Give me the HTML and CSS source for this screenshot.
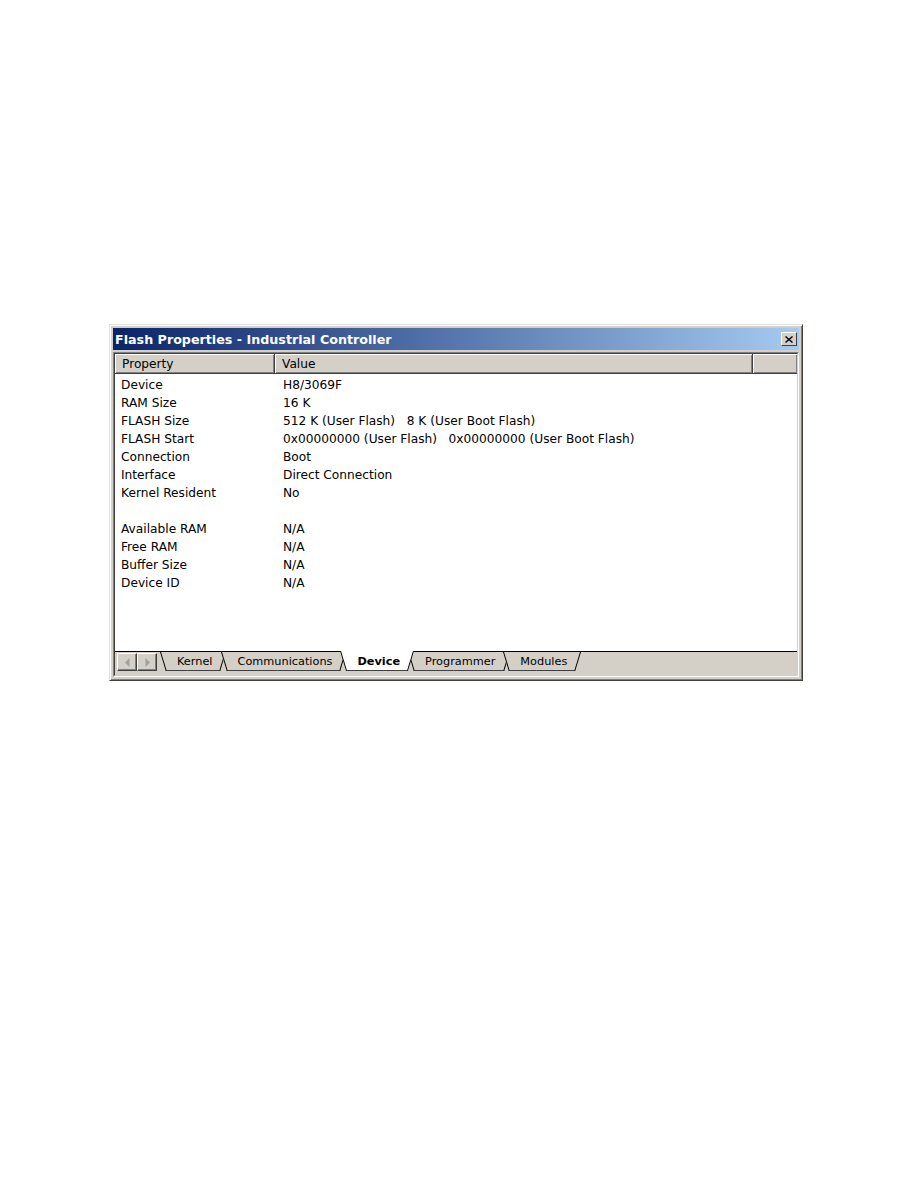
FILE: index.html
```
<!DOCTYPE html>
<html lang="en">
<head>
    <meta charset="UTF-8">
    <title>Flash Properties - Industrial Controller</title>
    <link rel="stylesheet" href="styles.css">
</head>
<body>
    <div class="page">
        <!-- Ventana de propiedades -->
        <div class="window">
            <div class="titlebar">
                <span>Flash Properties - Industrial Controller</span>
                <span class="close-btn">
                    <svg width="8" height="7" viewBox="0 0 8 7"><path d="M0.5 0.5 L7.5 6.5 M7.5 0.5 L0.5 6.5" stroke="#000" stroke-width="1.4"/></svg>
                </span>
            </div>

            <div class="list">
                <div class="list-inner">
                    <div class="header">
                        <div class="hcell prop">Property</div>
                        <div class="hcell val">Value</div>
                        <div class="hcell rest"></div>
                    </div>

                    <div class="rows">
                        <div class="row"><span class="k">Device</span><span class="v">H8/3069F</span></div>
                        <div class="row"><span class="k">RAM Size</span><span class="v">16 K</span></div>
                        <div class="row"><span class="k">FLASH Size</span><span class="v">512 K (User Flash)   8 K (User Boot Flash)</span></div>
                        <div class="row"><span class="k">FLASH Start</span><span class="v">0x00000000 (User Flash)   0x00000000 (User Boot Flash)</span></div>
                        <div class="row"><span class="k">Connection</span><span class="v">Boot</span></div>
                        <div class="row"><span class="k">Interface</span><span class="v">Direct Connection</span></div>
                        <div class="row"><span class="k">Kernel Resident</span><span class="v">No</span></div>
                        <div class="row"></div>
                        <div class="row"><span class="k">Available RAM</span><span class="v">N/A</span></div>
                        <div class="row"><span class="k">Free RAM</span><span class="v">N/A</span></div>
                        <div class="row"><span class="k">Buffer Size</span><span class="v">N/A</span></div>
                        <div class="row"><span class="k">Device ID</span><span class="v">N/A</span></div>
                    </div>

                    <!-- Pestañas -->
                    <div class="tabs">
                        <div class="scroll">
                            <span class="sbtn"><svg width="5" height="9" viewBox="0 0 5 9"><path d="M4.5 0 L0 4.5 L4.5 9 Z" fill="#a0a0a0"/></svg></span>
                            <span class="sbtn"><svg width="5" height="9" viewBox="0 0 5 9"><path d="M0.5 0 L5 4.5 L0.5 9 Z" fill="#a0a0a0"/></svg></span>
                        </div>
                        <div class="tab">Kernel</div>
                        <div class="tab">Communications</div>
                        <div class="tab active">Device</div>
                        <div class="tab">Programmer</div>
                        <div class="tab">Modules</div>
                    </div>
                </div>
            </div>
        </div>
    </div>
</body>
</html>
```

FILE: styles.css
```
/* Estilo general */
body { margin: 0; background-color: #fff; color: #000; font-family: "DejaVu Sans", Tahoma, sans-serif; font-size: 12.2px; }
.page { padding: 324px 0 0 109px; }

/* Ventana */
.window {
    width: 694px;
    height: 357px;
    box-sizing: border-box;
    background-color: #d4d0c8;
    border: 1px solid;
    border-color: #e4e2dc #404040 #404040 #e4e2dc;
    box-shadow: inset 1px 1px #fff, inset -1px -1px #808080;
    padding: 3px;
    display: flex;
    flex-direction: column;
}
.titlebar {
    height: 22px;
    flex: none;
    display: flex;
    align-items: center;
    justify-content: space-between;
    padding: 0 2px 0 2px;
    background: linear-gradient(to right, #0a246a, #a6caf0);
    color: #fff;
    font-weight: bold;
    font-size: 12.7px;
}
.close-btn {
    width: 16px;
    height: 14px;
    box-sizing: border-box;
    background-color: #d4d0c8;
    border: 1px solid;
    border-color: #fff #404040 #404040 #fff;
    display: flex;
    align-items: center;
    justify-content: center;
}

/* Lista */
.list {
    margin-top: 2px;
    flex: 1;
    display: flex;
    border: 1px solid;
    border-color: #808080 #fff #fff #808080;
}
.list-inner {
    flex: 1;
    display: flex;
    flex-direction: column;
    border: 1px solid;
    border-color: #404040 #d4d0c8 #d4d0c8 #404040;
    background-color: #fff;
}
.header { display: flex; height: 20px; flex: none; background-color: #d4d0c8; }
.hcell {
    box-sizing: border-box;
    height: 100%;
    display: flex;
    align-items: center;
    padding-left: 7px;
    border-right: 1px solid #404040;
    border-bottom: 1px solid #404040;
    box-shadow: inset 1px 1px #fff, inset -1px -1px #808080;
}
.hcell.prop { width: 160px; }
.hcell.val { width: 478px; }
.hcell.rest { flex: 1; border-right: none; }

.rows { flex: 1; padding-top: 2px; }
.row { display: flex; height: 18px; align-items: center; }
.row .k { width: 168px; box-sizing: border-box; padding-left: 6px; }
.row .v { white-space: pre; }

/* Pestañas */
.tabs {
    height: 24px;
    flex: none;
    box-sizing: border-box;
    border-top: 1px solid #000;
    background-color: #d4d0c8;
    display: flex;
    align-items: flex-start;
    padding-left: 2px;
    font-size: 11.3px;
}
.scroll { display: flex; margin-top: 1px; margin-right: 9px; }
.sbtn {
    width: 20px;
    height: 18px;
    box-sizing: border-box;
    border: 1px solid;
    border-color: #fff #404040 #404040 #fff;
    box-shadow: inset -1px -1px #808080;
    display: flex;
    align-items: center;
    justify-content: center;
}
.tab {
    position: relative;
    z-index: 1;
    height: 19px;
    display: flex;
    align-items: center;
    padding: 0 14px 0 17px;
    margin-left: -6px;
}
.tab::before, .tab::after {
    content: '';
    position: absolute;
    top: 0;
    bottom: 0;
    z-index: -1;
    background-color: #d4d0c8;
    border-bottom: 1px solid #404040;
    transform-origin: top;
}
.tab::before { left: 0; right: 50%; border-left: 1px solid #000; transform: skewX(17deg); }
.tab::after { left: 50%; right: 0; border-right: 1px solid #000; transform: skewX(-17deg); }
.tab.active { z-index: 2; font-weight: bold; margin-top: -1px; height: 20px; }
.tab.active::before, .tab.active::after { background-color: #fff; }
```
